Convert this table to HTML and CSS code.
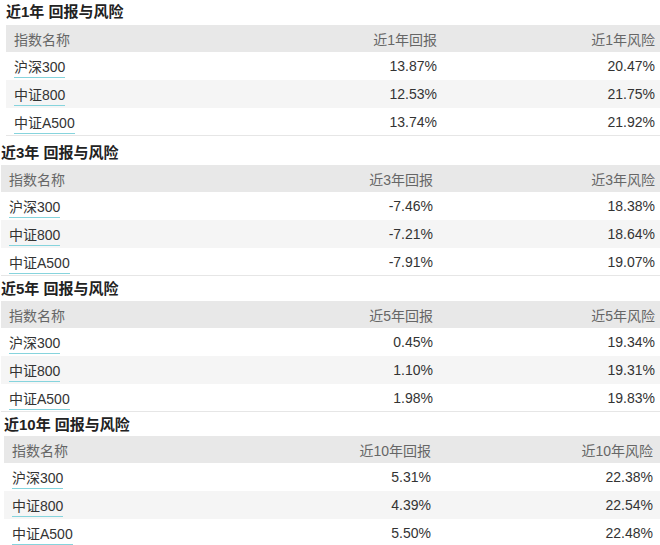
FILE: index.html
```html
<!DOCTYPE html>
<html lang="zh-CN">
<head>
<meta charset="utf-8">
<title>回报与风险</title>
<link rel="stylesheet" href="styles.css">
</head>
<body>
<section class="block s1">
  <h2 class="title">近1年 回报与风险</h2>
  <div class="table">
    <div class="row head"><span class="name">指数名称</span><span class="ret">近1年回报</span><span class="risk">近1年风险</span></div>
    <div class="row"><span class="name"><a class="link">沪深300</a></span><span class="ret">13.87%</span><span class="risk">20.47%</span></div>
    <div class="row alt"><span class="name"><a class="link">中证800</a></span><span class="ret">12.53%</span><span class="risk">21.75%</span></div>
    <div class="row last"><span class="name"><a class="link">中证A500</a></span><span class="ret">13.74%</span><span class="risk">21.92%</span></div>
  </div>
</section>
<section class="block s2">
  <h2 class="title">近3年 回报与风险</h2>
  <div class="table">
    <div class="row head"><span class="name">指数名称</span><span class="ret">近3年回报</span><span class="risk">近3年风险</span></div>
    <div class="row"><span class="name"><a class="link">沪深300</a></span><span class="ret">-7.46%</span><span class="risk">18.38%</span></div>
    <div class="row alt"><span class="name"><a class="link">中证800</a></span><span class="ret">-7.21%</span><span class="risk">18.64%</span></div>
    <div class="row last"><span class="name"><a class="link">中证A500</a></span><span class="ret">-7.91%</span><span class="risk">19.07%</span></div>
  </div>
</section>
<section class="block s3">
  <h2 class="title">近5年 回报与风险</h2>
  <div class="table">
    <div class="row head"><span class="name">指数名称</span><span class="ret">近5年回报</span><span class="risk">近5年风险</span></div>
    <div class="row"><span class="name"><a class="link">沪深300</a></span><span class="ret">0.45%</span><span class="risk">19.34%</span></div>
    <div class="row alt"><span class="name"><a class="link">中证800</a></span><span class="ret">1.10%</span><span class="risk">19.31%</span></div>
    <div class="row last"><span class="name"><a class="link">中证A500</a></span><span class="ret">1.98%</span><span class="risk">19.83%</span></div>
  </div>
</section>
<section class="block s4">
  <h2 class="title">近10年 回报与风险</h2>
  <div class="table">
    <div class="row head"><span class="name">指数名称</span><span class="ret">近10年回报</span><span class="risk">近10年风险</span></div>
    <div class="row"><span class="name"><a class="link">沪深300</a></span><span class="ret">5.31%</span><span class="risk">22.38%</span></div>
    <div class="row alt"><span class="name"><a class="link">中证800</a></span><span class="ret">4.39%</span><span class="risk">22.54%</span></div>
    <div class="row last"><span class="name"><a class="link">中证A500</a></span><span class="ret">5.50%</span><span class="risk">22.48%</span></div>
  </div>
</section>
</body>
</html>
```
FILE: styles.css
```css
html, body {
  margin: 0;
  padding: 0;
  background: #ffffff;
}
body {
  width: 660px;
  height: 545px;
  overflow: hidden;
  font-family: "Liberation Sans", "Noto Sans CJK SC", sans-serif;
  color: #333333;
  font-size: 14px;
}
.block {
  display: flex;
  flex-direction: column;
}
.title {
  margin: 0;
  font-size: 15px;
  font-weight: bold;
  color: #222222;
  display: flex;
  align-items: center;
  height: 25px;
  line-height: 1;
}
.s1 { margin-left: 6px; }
.s1 .title { height: 25px; padding-bottom: 2px; box-sizing: border-box; }
.s2 { margin-left: 1px; }
.s2 .title { height: 29px; padding-top: 4px; box-sizing: border-box; }
.s3 { margin-left: 1px; }
.s3 .title { height: 25px; }
.s4 { margin-left: 4px; }
.s4 .title { height: 24px; }

.table {
  display: flex;
  flex-direction: column;
}
.row {
  display: grid;
  grid-template-columns: 1fr 230px 222px;
  align-items: center;
  height: 28px;
  padding-left: 8px;
  padding-right: 5px;
}
.s1 .row { grid-template-columns: 1fr 227px 218px; }
.s4 .row { grid-template-columns: 1fr 228px 222px; padding-right: 7px; }
.row.head {
  height: 27px;
  background: #e8e8e8;
  color: #666666;
}
.row.alt {
  background: #f5f5f5;
}
.row.last {
  height: 27px;
  border-bottom: 1px solid #e6e6e6;
}
.ret, .risk {
  text-align: right;
}
.head .ret, .head .risk {
  color: #666666;
}
.link {
  color: #333333;
  text-decoration: none;
  border-bottom: 1px solid #86d4dd;
  padding-bottom: 2px;
}
```
